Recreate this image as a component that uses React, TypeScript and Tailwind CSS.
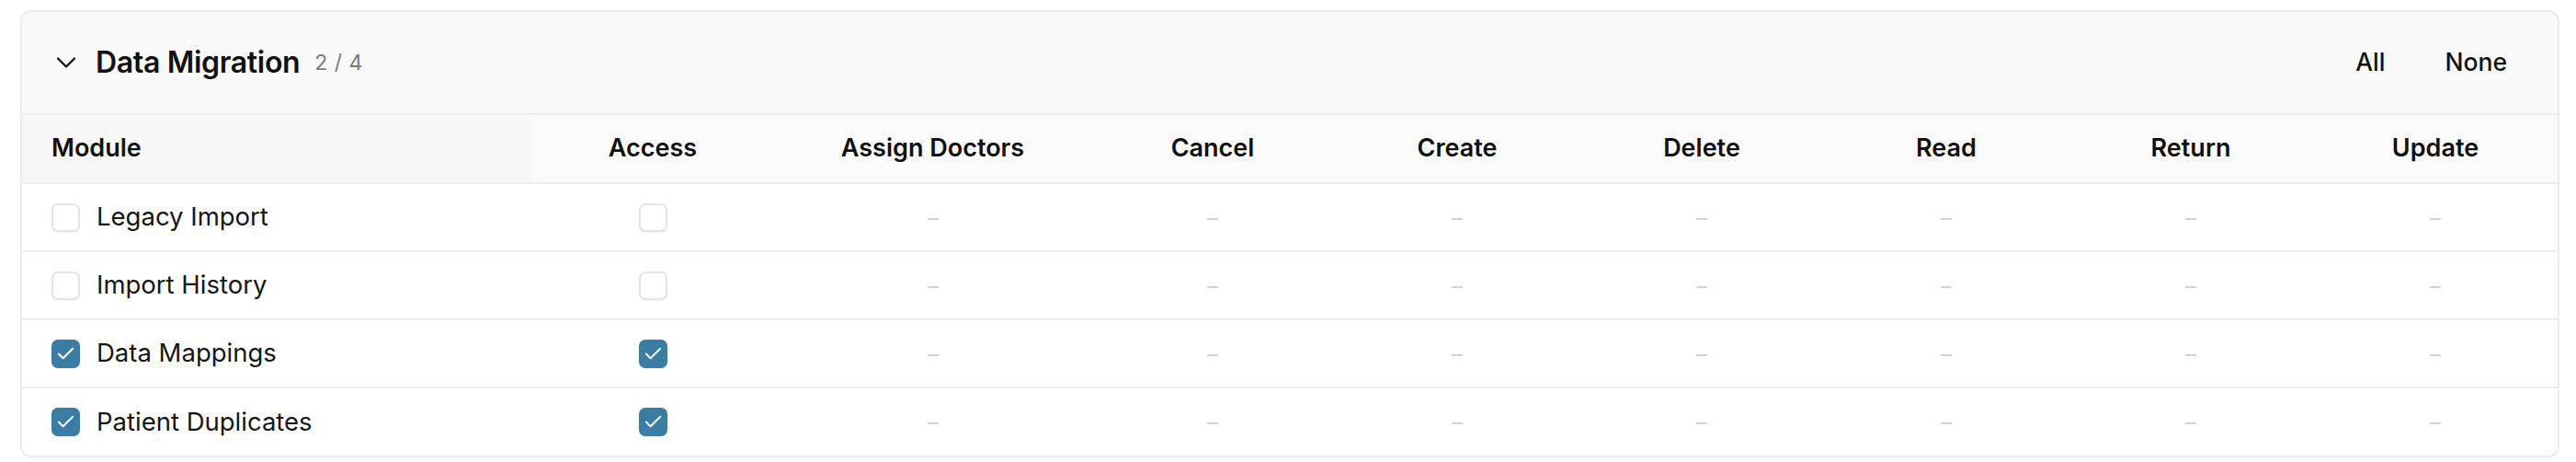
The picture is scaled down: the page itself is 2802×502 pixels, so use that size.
import { Check, ChevronDown } from 'lucide-react';

type Row = { name: string; checked: boolean };

const columns = ['Access', 'Assign Doctors', 'Cancel', 'Create', 'Delete', 'Read', 'Return', 'Update'];

const rows: Row[] = [
  { name: 'Legacy Import', checked: false },
  { name: 'Import History', checked: false },
  { name: 'Data Mappings', checked: true },
  { name: 'Patient Duplicates', checked: true },
];

function Box({ checked }: { checked: boolean }) {
  if (checked) {
    return (
      <span className="flex h-[31px] w-[31px] shrink-0 items-center justify-center rounded-[7px] bg-[#3b7ca5] shadow-[0_1px_2px_rgba(0,0,0,0.08)]">
        <Check size={23} strokeWidth={2} className="text-white" />
      </span>
    );
  }
  return (
    <span className="block h-[31px] w-[31px] shrink-0 rounded-[7px] border-2 border-[#e4e4e4] bg-white shadow-[0_1px_2px_rgba(0,0,0,0.05)]" />
  );
}

export default function App() {
  return (
    <div className="min-h-screen bg-white pl-[22px] pr-[18px] pt-[11px] font-['Inter',sans-serif] text-[#111]">
      <div className="overflow-hidden rounded-[12px] border-2 border-[#ececec] bg-white">
        {/* header */}
        <div className="flex h-[112px] items-center justify-between border-b-2 border-[#ebebeb] bg-[#f9f9f9] pl-[30px] pr-[39px]">
          <div className="flex items-center">
            <ChevronDown size={36} strokeWidth={1.5} className="text-[#111]" />
            <h2 className="ml-[14px] text-[32px] font-semibold tracking-[-0.01em]">Data Migration</h2>
            <span className="ml-[16px] text-[23px] tracking-[0.02em] text-[#7a7a7a]">2 / 4</span>
          </div>
          <div className="flex items-center gap-[33px] text-[26.5px] font-medium">
            <button className="px-[16px]">All</button>
            <button className="px-[16px]">None</button>
          </div>
        </div>

        <table className="w-full table-fixed border-collapse">
          <colgroup>
            <col className="w-[553px]" />
            <col className="w-[266px]" />
            <col className="w-[343px]" />
            <col className="w-[266px]" />
            <col className="w-[266px]" />
            <col className="w-[266px]" />
            <col className="w-[266px]" />
            <col className="w-[266px]" />
            <col className="w-[266px]" />
          </colgroup>
          <thead>
            <tr className="h-[74px] border-b-2 border-[#ebebeb] bg-[#fafafa]">
              <th className="bg-[#f7f7f7] pl-[32px] text-left text-[27px] font-semibold">Module</th>
              {columns.map((c) => (
                <th key={c} className="text-center text-[27px] font-semibold">
                  {c}
                </th>
              ))}
            </tr>
          </thead>
          <tbody>
            {rows.map((r, i) => (
              <tr key={r.name} className={`h-[74px] ${i < rows.length - 1 ? 'border-b-2 border-[#ededed]' : ''}`}>
                <td className="pl-[32px]">
                  <div className="flex items-center gap-[18px]">
                    <Box checked={r.checked} />
                    <span className="text-[27.5px] text-[#161616]">{r.name}</span>
                  </div>
                </td>
                <td>
                  <div className="flex justify-center">
                    <Box checked={r.checked} />
                  </div>
                </td>
                {columns.slice(1).map((c) => (
                  <td key={c} className="text-center">
                    <span className="inline-block h-[2px] w-[12px] bg-[#d2d2d2] align-middle" />
                  </td>
                ))}
              </tr>
            ))}
          </tbody>
        </table>
      </div>
    </div>
  );
}
